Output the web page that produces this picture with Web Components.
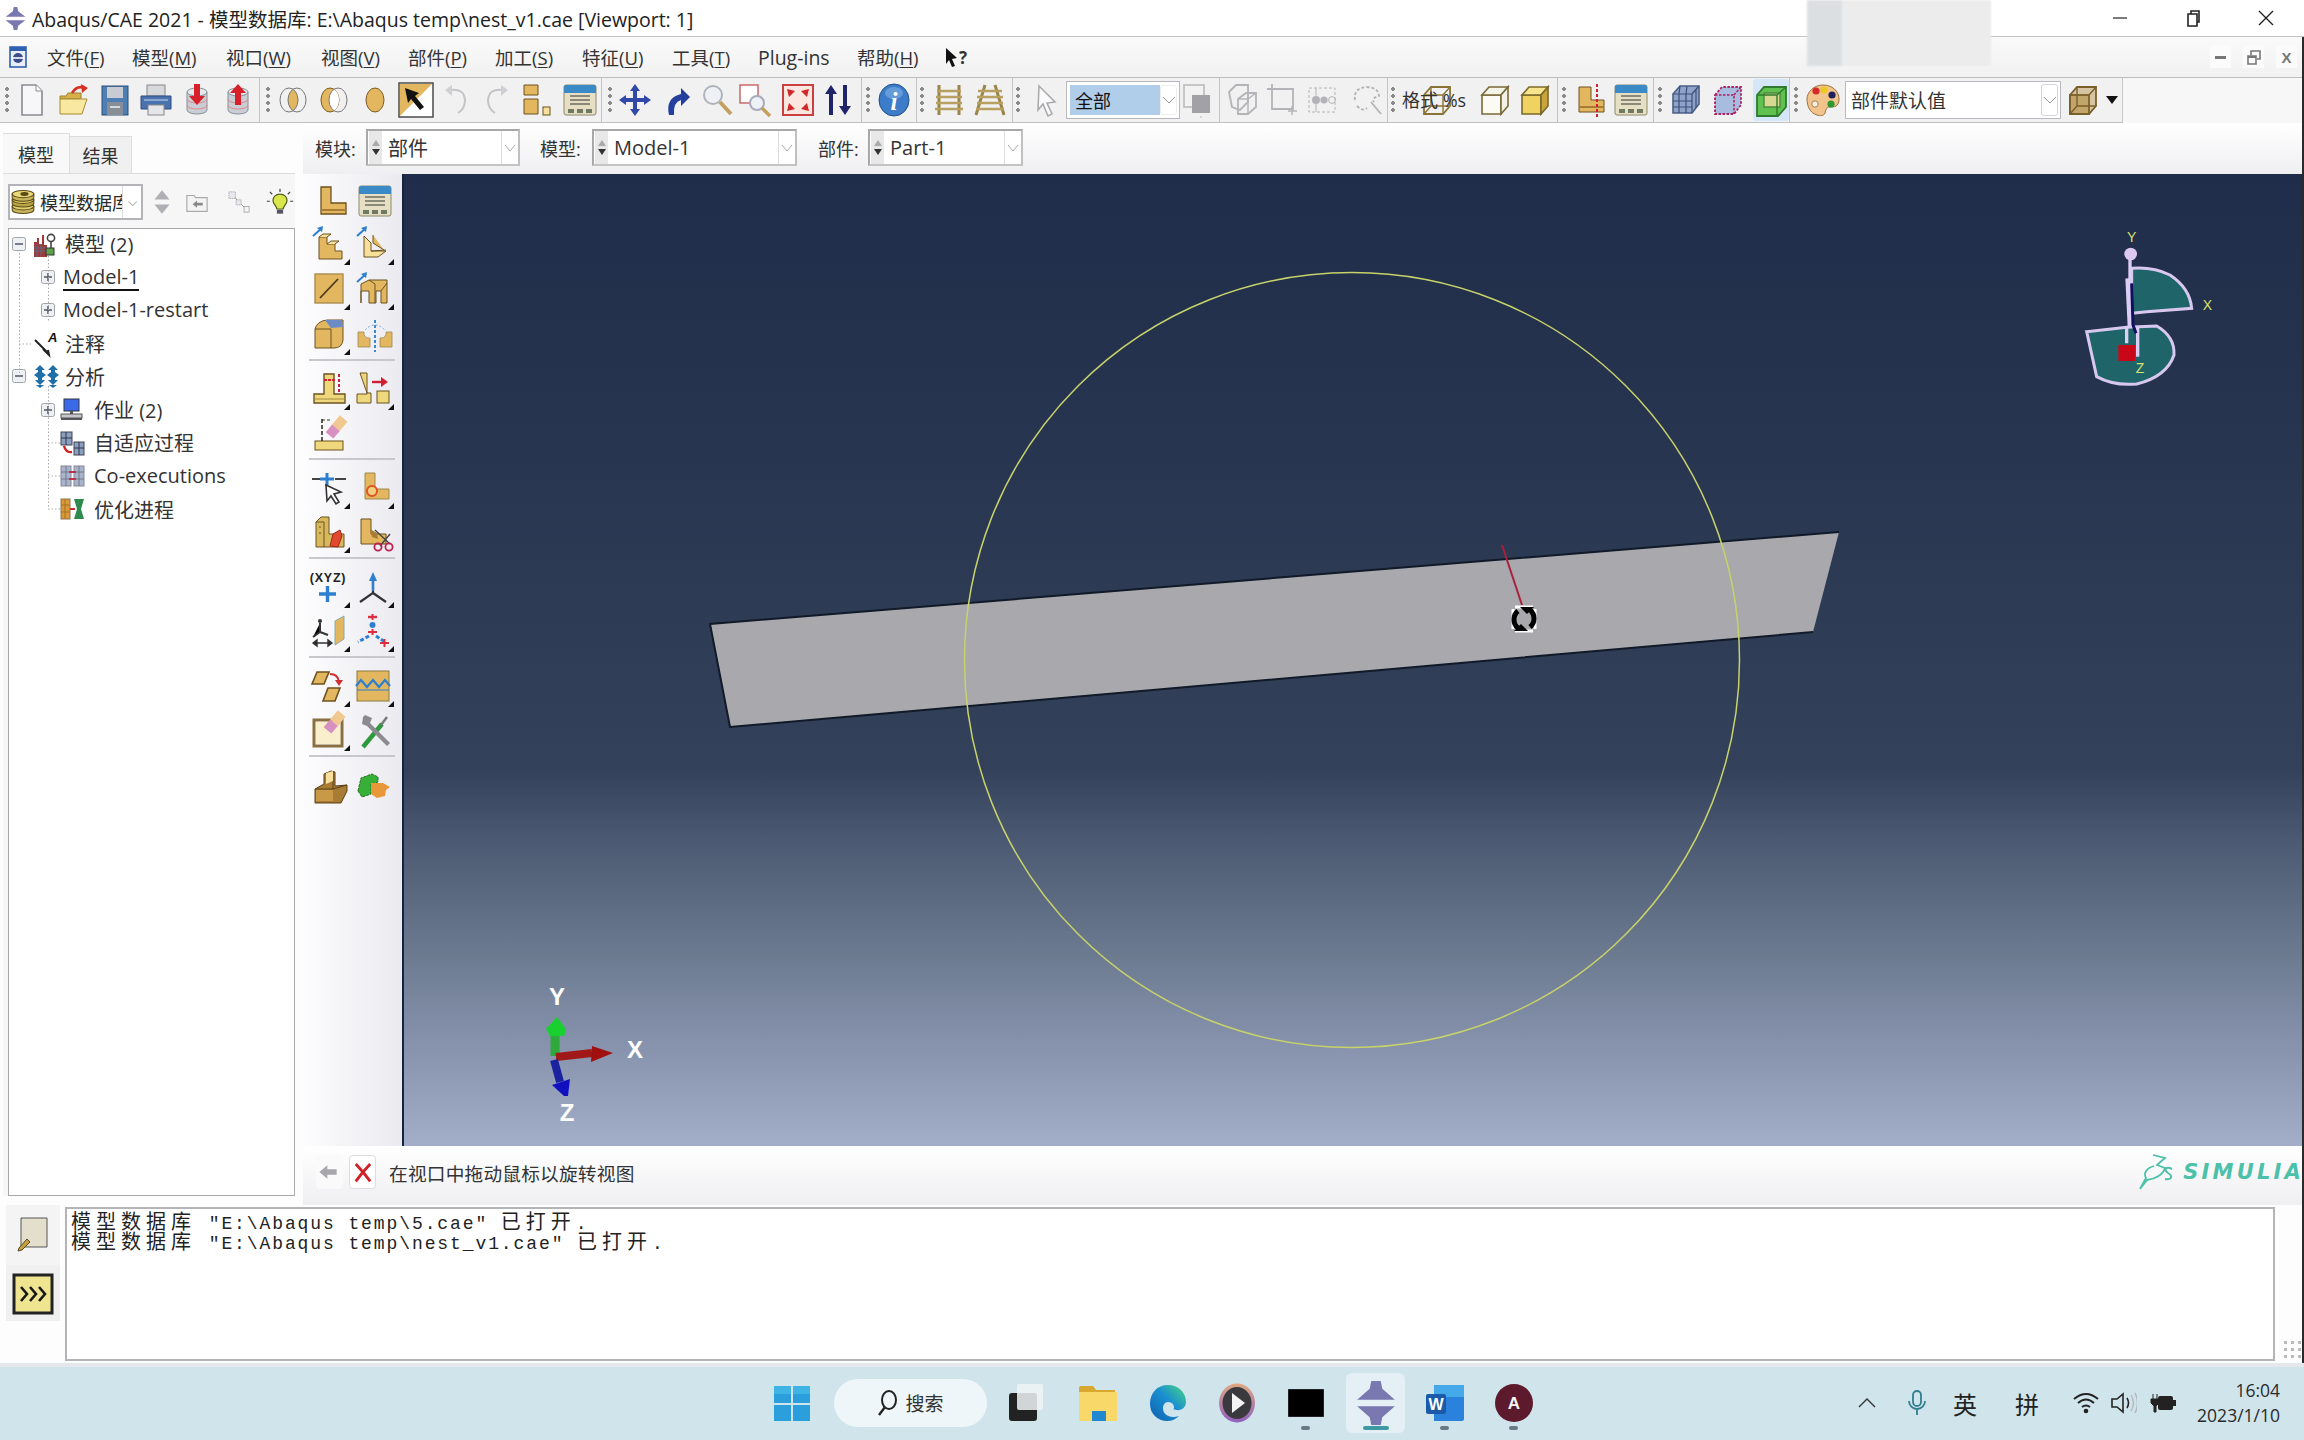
<!DOCTYPE html>
<html lang="zh">
<head>
<meta charset="utf-8">
<title>Abaqus/CAE 2021</title>
<style>
  html, body { margin: 0; height: 100%; overflow: hidden; background: #fff; }
  body { font-family: "Open Sans", "Noto Sans CJK SC", sans-serif; color: #2b2b2b; }
</style>
</head>
<body>
<abq-app>
  <abq-titlebar>Abaqus/CAE 2021 - 模型数据库: E:\Abaqus temp\nest_v1.cae [Viewport: 1]</abq-titlebar>
  <abq-menubar></abq-menubar>
  <abq-toolbar></abq-toolbar>
  <abq-workspace>
    <abq-sidepanel slot="side"></abq-sidepanel>
    <abq-modulebar slot="top"></abq-modulebar>
    <abq-toolbox slot="tools"></abq-toolbox>
    <abq-viewport slot="view"></abq-viewport>
    <abq-prompt slot="bottom">在视口中拖动鼠标以旋转视图</abq-prompt>
  </abq-workspace>
  <abq-messages></abq-messages>
  <win-taskbar></win-taskbar>
</abq-app>

<script>
const G = '#e3b75f', GL = '#f6e09c', GD = '#a87c34', O = '#6d5220', B = '#2f7fd0', GR = '#b4b4b8';

const db = ( d ) => `
  <path d="M8 10v18a10 4 0 0 0 20 0V10z" fill="#c9ced6" stroke="#8a8f98"/>
  <ellipse cx="18" cy="10" rx="10" ry="4" fill="#e6e8ec" stroke="#8a8f98"/>
  <path d="M8 17a10 4 0 0 0 20 0M8 23a10 4 0 0 0 20 0" fill="none" stroke="#e08a8a"/>
  <path d="${ d }" fill="#d8202a"/>`;

const lens = 'M17 5.25A9 12 0 0 1 17 26.75A9 12 0 0 1 17 5.25z';

const cube = ( front, top, side, line ) => `
  <path d="M5 13h19v19H5z" fill="${ front }" stroke="${ line }" stroke-width="1.6"/>
  <path d="M5 13l7-8h19l-7 8z" fill="${ top }" stroke="${ line }" stroke-width="1.6"/>
  <path d="M24 13l7-8v19l-7 8z" fill="${ side }" stroke="${ line }" stroke-width="1.6"/>`;

const wire = ( line, fill ) => `
  <path d="M5 13l7-8h19v19l-7 8H5z" fill="${ fill }" stroke="${ line }" stroke-width="1.8"/>
  <path d="M5 13h19v19M24 13l7-8M12 5v19h19M12 24l-7 8" fill="none" stroke="${ line }" stroke-width="1.4"/>`;

const manager = `
  <rect x="2" y="3" width="32" height="30" rx="2" fill="#e6dfc4" stroke="#8d8a6e"/>
  <path d="M2 5a2 2 0 0 1 2-2h28a2 2 0 0 1 2 2v6H2z" fill="#3b8ac8"/>
  <path d="M8 14h20M8 18h20M8 22h20" stroke="#6e6e60" stroke-width="1.6"/>
  <path d="M6 27h6v4H6zM15 27h6v4h-6zM24 27h6v4h-6z" fill="#6e7a62"/>`;

const ladder = ( r1, r2 ) => `
  <path d="M${ r1 } 3L${ r2 } 33M${ 36 - r1 } 3L${ 36 - r2 } 33" stroke="#9a8448" stroke-width="3" fill="none"/>
  <path d="M6 9h24M5 15h26M5 21h26M4 27h28" stroke="#b8a060" stroke-width="2.4"/>`;

const tee = `<path d="M13 3h10v20h11v9H3v-9h10z" fill="#efd87c" stroke="${ O }" stroke-width="1.4"/><path d="M3 28h31" stroke="#a08c40"/>`;
const ell = `<path d="M8 4h10v16h15v11H8z" fill="${ G }" stroke="${ O }" stroke-width="1.3"/><path d="M8 27h25" stroke="${ GD }" stroke-width="2"/>`;
const eraser = ( x, y ) => `
  <g transform="translate(${ x } ${ y }) rotate(40)"><rect x="-5" y="-15" width="10" height="12" fill="#f0c890"/><rect x="-5" y="-3" width="10" height="10" fill="#d890c0"/></g>`;

const ICONS = {
  new: `<path d="M8 3h14l6 6v24H8z" fill="#f7f7f7" stroke="#8a8a92" stroke-width="1.6"/><path d="M22 3v6h6" fill="#fff" stroke="#8a8a92"/>`,
  open: `<path d="M3 14h6l2-3h13v6H3z" fill="#d8b048" stroke="#9a8030"/><path d="M3 17h27l-5 15H3z" fill="#f8e8a0" stroke="#a88a30"/><path d="M15 11q5-8 13-5" stroke="#d83020" stroke-width="2.6" fill="none"/><path d="M24 2l7 4-6 5z" fill="#d83020"/>`,
  save: `<rect x="5" y="4" width="26" height="29" fill="#4d7fb4" stroke="#2c4f78"/><rect x="10" y="5" width="16" height="11" fill="#c8ccd2"/><rect x="10" y="20" width="16" height="13" fill="#888e98"/><rect x="13" y="24" width="10" height="2" fill="#d4d8dc"/>`,
  print: `<rect x="9" y="3" width="18" height="11" fill="#d6d8dc" stroke="#888"/><path d="M3 14h30v13H3z" fill="#4a72ae" stroke="#2f4d80"/><rect x="10" y="23" width="16" height="10" fill="#e4e6ea" stroke="#888"/><path d="M6 18h24" stroke="#8aa8d0" stroke-width="2"/>`,
  import: db( 'M15 2h6v12h5l-8 9-8-9h5z' ),
  export: db( 'M18 2l8 9h-5v12h-6V11h-5z' ),
  venn1: `<g transform="translate(1 2)"><path d="${ lens }" fill="${ G }"/><ellipse cx="13" cy="16" rx="9" ry="12" fill="none" stroke="#777"/><ellipse cx="21" cy="16" rx="9" ry="12" fill="none" stroke="#777"/></g>`,
  venn2: `<g transform="translate(1 2)"><ellipse cx="13" cy="16" rx="9" ry="12" fill="${ G }" stroke="#7a5a20"/><path d="${ lens }" fill="#fff"/><ellipse cx="21" cy="16" rx="9" ry="12" fill="none" stroke="#777"/></g>`,
  venn3: `<ellipse cx="18" cy="18" rx="9" ry="12" fill="${ G }" stroke="#7a5a20"/>`,
  pick: `<rect x="1" y="1" width="34" height="34" fill="#fff" stroke="#555" stroke-width="1.6"/><path d="M2 2h32L2 34z" fill="${ G }"/><path d="M7 6l14 5-4 3 9 11-4 3-9-11-3 4z" fill="#111"/>`,
  undo: `<path d="M12 8q14-2 15 10 0 9-7 13" fill="none" stroke="#c4c4c8" stroke-width="2"/><path d="M14 3l-7 5 7 6z" fill="#d0d0d4"/>`,
  redo: `<path d="M24 8q-14-2-15 10 0 9 7 13" fill="none" stroke="#c4c4c8" stroke-width="2"/><path d="M22 3l7 5-7 6z" fill="#d0d0d4"/>`,
  parts: `<path d="M6 3h14v10H6z" fill="${ G }" stroke="${ O }"/><path d="M6 17h14v15H6z" fill="${ G }" stroke="${ O }"/><rect x="25" y="25" width="7" height="8" fill="${ GL }" stroke="${ O }"/>`,
  manager,
  pan: `<path d="M18 2l5 7h-3v7h7v-3l7 5-7 5v-3h-7v7h3l-5 7-5-7h3v-7H9v3l-7-5 7-5v3h7V9h-3z" fill="#3048a8"/>`,
  rotate: `<path d="M11 33q-4-17 12-21V6l9 9-9 9v-6q-8 2-7 15z" fill="#25409c"/>`,
  zoom: `<circle cx="14" cy="13" r="9" fill="#eef2f6" stroke="#b0b4ba" stroke-width="2"/><path d="M21 20l11 12" stroke="#c4a060" stroke-width="4"/>`,
  boxzoom: `<rect x="3" y="3" width="18" height="18" fill="#fff" stroke="#c86060" stroke-width="1.4"/><circle cx="20" cy="21" r="7" fill="#eef2f6" stroke="#aab" stroke-width="2"/><path d="M25 26l8 8" stroke="#c4a060" stroke-width="3.6"/>`,
  fit: `<rect x="3" y="3" width="30" height="30" fill="#fbe6e0" stroke="#c84040" stroke-width="2"/><path d="M7 7l8 2-6 6zM29 7l-8 2 6 6zM7 29l8-2-6-6zM29 29l-8-2 6-6z" fill="#d02828"/>`,
  updown: `<path d="M11 3l6 9h-4v21H9V12H5zM25 33l-6-9h4V3h4v21h4z" fill="#20246a"/>`,
  info: `<ellipse cx="18" cy="18" rx="15" ry="16" fill="#3c7cc8" stroke="#20508c"/><ellipse cx="18" cy="11" rx="9" ry="6" fill="#7eb0e4" opacity=".6"/><text x="18" y="28" font-family="Liberation Serif" font-style="italic" font-weight="700" font-size="25" text-anchor="middle" fill="#fff">i</text>`,
  ladder1: ladder( 8, 8 ),
  ladder2: ladder( 13, 4 ),
  arrow: `<path d="M9 4l16 16-8 1 5 11-4 2-5-12-5 6z" fill="#fafafa" stroke="#a8a8ac" stroke-width="1.5"/>`,
  grayc: `<rect x="4" y="3" width="20" height="22" fill="#f2f2f2" stroke="#bbb" stroke-width="1.6"/><rect x="12" y="13" width="18" height="18" fill="#a2a2a6"/><path d="M20 35h2" stroke="#bbb"/>`,
  graybox: `<path d="M4 10l7-7h12v17l-8 8-8-3z" fill="none" stroke="${ GR }" stroke-width="1.8"/><path d="M13 17l8-6h10v14l-8 7H13z" fill="none" stroke="${ GR }" stroke-width="1.8"/><path d="M13 17h10v15M23 17l8-6" fill="none" stroke="${ GR }" stroke-width="1.4"/>`,
  graycrop: `<path d="M8 2v26M3 7h26v20H8" fill="none" stroke="${ GR }" stroke-width="1.8"/><path d="M28 24v9M24 29h9" stroke="${ GR }" stroke-width="1.4"/>`,
  graydots: `<rect x="4" y="6" width="26" height="24" fill="none" stroke="${ GR }" stroke-dasharray="3 2"/><circle cx="11" cy="18" r="4" fill="${ GR }"/><circle cx="19" cy="18" r="3.6" fill="${ GR }"/><circle cx="27" cy="18" r="3.4" fill="none" stroke="${ GR }"/><path d="M11 6v24" stroke="${ GR }"/>`,
  graylasso: `<path d="M6 18q-2-12 12-13 12 1 12 9-8 2-5 6M8 24q6 6 10 2" fill="none" stroke="${ GR }" stroke-width="1.8" stroke-dasharray="3 2"/><path d="M22 20l10 12" stroke="${ GR }" stroke-width="1.8"/>`,
  wirecube: wire( '#8a7434', 'none' ),
  whitecube: cube( '#fbfbf4', '#f4f4e8', '#f2f2e6', '#7a6a3a' ),
  goldcube: cube( '#f0d260', '#f8e48c', '#caa43c', '#7a6a2a' ),
  gold2cube: `<path d="M5 13h19v19H5z" fill="#c8ac74" stroke="#7a5f28" stroke-width="1.8"/>` + wire( '#7a5f28', 'rgba(190,160,100,.55)' ),
  datum: `<path d="M6 5h12v13h13v12H6z" fill="${ G }" stroke="${ O }"/><path d="M6 25h25" stroke="${ GD }" stroke-width="2"/><path d="M24 2v34" stroke="#d02030" stroke-width="2" stroke-dasharray="3 2"/>`,
  meshcube: `<path d="M5 12l7-8h19v18l-7 9H5z" fill="#8fa3c8" stroke="#4c5f88" stroke-width="1.6"/><path d="M5 12h19v19M24 12l7-8M11 12v19M18 12v19M5 19h19M5 25h19M12 4l-1 8M19 4l-1 8M28 8v18" fill="none" stroke="#3c4f78" stroke-width="1.2"/>`,
  dashcube: `<path d="M5 13l7-8h19v18l-7 9H5z" fill="#a8bce0" stroke="#b02060" stroke-width="1.8" stroke-dasharray="2.5 1.5"/><path d="M5 13h19v19M24 13l7-8" fill="none" stroke="#b02060" stroke-width="1.5" stroke-dasharray="2.5 1.5"/>`,
  greencube: `<path d="M4 13l7-8h22v20l-8 9H4z" fill="#60c050" stroke="#2f7a2c" stroke-width="1.8"/><path d="M11 11h16v14H11z" fill="#d8d890" stroke="#4a8a3c" stroke-width="1.4"/><path d="M4 13h20v21M24 13l9-8" fill="none" stroke="#2f7a2c" stroke-width="1.4"/>`,
  palette: `<path d="M18 3c9 0 16 6 16 14s-5 8-9 8-4 3-5 6-5 3-8 2C5 31 2 24 2 17S9 3 18 3z" fill="#f2c48c" stroke="#9a7040"/><circle cx="11" cy="9" r="3.6" fill="#d82828"/><circle cx="19" cy="8" r="3.4" fill="#eec820"/><circle cx="27" cy="13" r="3.6" fill="#20205c"/><circle cx="26" cy="22" r="3.6" fill="#2c9a30"/><circle cx="10" cy="22" r="3.2" fill="#fbeedd" stroke="#a08060"/>`,
  note: `<path d="M7 3h26v29H7z" fill="#e4dfcc" stroke="#555"/><path d="M5 33l8-9 3 3-8 8-4 1z" fill="#c4a040" stroke="#5a4a20"/>`,
  go: `<rect x="0" y="0" width="38" height="38" fill="#efe590" stroke="#222" stroke-width="3"/><path d="M7 12l6 7-6 7M16 12l6 7-6 7M25 12l6 7-6 7" fill="none" stroke="#181818" stroke-width="2.6"/>`,
  back: `<path d="M14 8v6h14v8H14v6L2 18z" fill="#a8a8ac"/>`,
  stop: `<path d="M8 7l10 11L8 31M28 7L18 18l10 13" fill="none" stroke="#d02028" stroke-width="4"/>`,
  dbstack: `<g stroke="#5a4a18" stroke-width="1.4"><path d="M3 24v5a15 5 0 0 0 30 0v-5z" fill="#c8b45c"/><ellipse cx="18" cy="24" rx="15" ry="5" fill="#e0d070"/><path d="M3 15v5a15 5 0 0 0 30 0v-5z" fill="#b8a448"/><ellipse cx="18" cy="15" rx="15" ry="5" fill="#e0cc68"/><path d="M3 7v5a15 5 0 0 0 30 0V7z" fill="#c8b45c"/><ellipse cx="18" cy="7" rx="15" ry="5" fill="#e8d878"/><ellipse cx="20" cy="7" rx="5" ry="2" fill="#5a4a18"/></g>`,
  updownpale: `<path d="M18 4l9 11H9zM18 32l9-11H9z" fill="#b0b0b4"/>`,
  folderup: `<path d="M4 9h10l2 3h16v19H4z" fill="#f4f4f4" stroke="#aaa" stroke-width="1.6"/><path d="M12 21l6-5v3h8v4h-8v3z" fill="#8a8a8a"/>`,
  tree2: `<rect x="4" y="4" width="9" height="9" fill="#e8e8f0" stroke="#999" stroke-dasharray="2 1"/><rect x="14" y="15" width="7" height="7" fill="#e8e8f0" stroke="#999" stroke-dasharray="2 1"/><rect x="25" y="24" width="7" height="8" fill="#f4f4f4" stroke="#999"/><path d="M13 12l2 3M21 21l4 4" stroke="#777"/>`,
  bulb: `<path d="M18 8c6 0 9 4 9 8 0 5-4 6-5 11h-8c-1-5-5-6-5-11 0-4 3-8 9-8z" fill="#d8e84c" stroke="#556020" stroke-width="1.6"/><path d="M14 28h8v5h-8z" fill="#556"/><path d="M18 1v4M5 5l3 3M31 5l-3 3M1 17h4M31 17h4" stroke="#444" stroke-width="1.5"/>`,

  models: `<path d="M1 22V10h3V6h2v6h3V3h2v10h3v12H1z" fill="#a03838"/><path d="M1 16h13M1 19h13M4 12v13M8 12v13" stroke="#5a6a88"/><circle cx="18" cy="6" r="3.6" fill="#fff" stroke="#444" stroke-width="1.6"/><path d="M18 10v7" stroke="#444" stroke-width="1.6"/><rect x="13" y="16" width="8" height="7" fill="#5ea04a" stroke="#333"/>`,
  annot: `<path d="M2 9l14 14M10 18l6 6-1-5" stroke="#222" stroke-width="2" fill="none"/><text x="15" y="11" font-family="Liberation Sans" font-weight="700" font-style="italic" font-size="13" fill="#111">A</text>`,
  analysis: `<g fill="#1f6fa8"><path d="M7 1l5 5H9v2l4 3-4 3v2h3l-5 5-5-5h3v-2l-4-3 4-3V6H2z"/><path d="M7 24l4-3H3z"/><path d="M20 1l5 5h-3v2l4 3-4 3v2h3l-5 5-5-5h3v-2l-4-3 4-3V6h-3z"/><path d="M20 24l4-3h-8z"/></g>`,
  job: `<rect x="4" y="1" width="15" height="12" fill="#3a6ae8" stroke="#334"/><path d="M10 13h3v3h-3z" fill="#555"/><rect x="1" y="16" width="21" height="4" fill="#c8c8cc" stroke="#555"/><path d="M1 20h21v2H1z" fill="#555"/>`,
  adapt: `<rect x="1" y="1" width="11" height="13" fill="#8aa0c0" stroke="#445"/><rect x="14" y="11" width="10" height="13" fill="#8aa0c0" stroke="#445"/><path d="M6 1v13M1 7h11M19 11v13M14 17h10" stroke="#334"/><path d="M4 15q2 7 8 6" stroke="#d02020" stroke-width="2.4" fill="none"/>`,
  coexec: `<rect x="1" y="2" width="10" height="20" fill="#a8b4cc" stroke="#889"/><rect x="14" y="2" width="10" height="20" fill="#a8b4cc" stroke="#889"/><path d="M6 2v20M19 2v20M1 8h10M14 8h10M1 15h10M14 15h10" stroke="#778"/><path d="M9 8h7M9 15h7" stroke="#c03048" stroke-width="2"/>`,
  optim: `<rect x="1" y="2" width="9" height="20" fill="#d89838" stroke="#875"/><path d="M5 2v20M1 8h9M1 15h9" stroke="#a87020"/><path d="M14 2h10l-3 10 3 10H14l3-10z" fill="#2f8a50"/><path d="M10 12h5" stroke="#c03030" stroke-width="2"/>`,

  t_part: ell,
  t_manager: manager,
  t_solid: `<path d="M8 11h8v7h8v7h7v8H8z" fill="${ G }" stroke="${ O }"/><path d="M8 11l4-3h8l-4 3M16 18l4-3h8l-4 3" fill="${ GL }" stroke="${ O }"/><path d="M2 10l9-8" stroke="${ B }" stroke-width="2"/><path d="M12 0l-1 6-5-4z" fill="${ B }"/>`,
  t_shell: `<path d="M9 10l7 7v8h15l-8 6H9z" fill="${ GL }" stroke="${ O }"/><path d="M16 25l15-1" stroke="${ O }"/><path d="M18 9v8l11 7" fill="${ G }" stroke="${ O }"/><path d="M2 10l9-8" stroke="${ B }" stroke-width="2"/><path d="M12 0l-1 6-5-4z" fill="${ B }"/>`,
  t_wire: `<rect x="4" y="3" width="28" height="29" fill="${ G }" stroke="#a88e50" stroke-width="1.4"/><path d="M9 27L27 8" stroke="#4a3a18" stroke-width="1.8"/>`,
  t_cutshell: `<path d="M6 13l8-4h18v23h-6V20h-5v12h-7V20H6v12z" fill="${ G }" stroke="${ O }"/><path d="M14 9l6 4v19M26 20l6-8" fill="none" stroke="${ O }"/><path d="M2 11l9-8" stroke="${ B }" stroke-width="2"/><path d="M12 1l-1 6-5-4z" fill="${ B }"/>`,
  t_round: `<path d="M4 13q2-8 12-9h16v20q-1 8-9 8H4z" fill="${ G }" stroke="${ O }"/><path d="M14 4l6 8 12-1-1-7z" fill="#6c8cc8"/><path d="M4 13h16v19" fill="none" stroke="${ O }"/>`,
  t_mirror: `<path d="M1 14h6v3q2 4 6 3v9H1zM35 14h-6v3q-2 4-6 3v9h12z" fill="${ G }" stroke="#a08850" stroke-width=".8"/><path d="M18 2v32" stroke="#3a8ad0" stroke-width="2" stroke-dasharray="3 2"/><path d="M8 12q10-10 20 0" fill="none" stroke="#6aa8e0" stroke-dasharray="2 2"/>`,
  t_t1: tee + `<path d="M13 9h11" stroke="#d02030" stroke-width="2" stroke-dasharray="3 1"/><path d="M28 3v18" stroke="#c02040" stroke-width="2" stroke-dasharray="3 2"/>`,
  t_t2: `<path d="M5 2h7v21H2v9h14V22h-4z" fill="#efd87c" stroke="${ O }"/><rect x="22" y="20" width="12" height="12" fill="#efd87c" stroke="${ O }"/><path d="M17 11h11" stroke="#d02030" stroke-width="2.4"/><path d="M33 11l-7-5v10z" fill="#d02030"/>`,
  t_t3: `<rect x="2" y="24" width="28" height="9" fill="#efd87c" stroke="${ O }"/><path d="M9 2v22" stroke="#332" stroke-width="1.6" stroke-dasharray="4 2"/><path d="M9 3h8" stroke="#332" stroke-dasharray="3 2"/>` + eraser( 21, 13 ),
  t_axis: `<path d="M1 9h8M24 9h11" stroke="#444" stroke-width="2.2"/><path d="M9 9h14M16 3v13" stroke="${ B }" stroke-width="3"/><path d="M15 15l15 7-7 2 5 8-3 2-5-8-4 5z" fill="#fff" stroke="#333" stroke-width="1.6"/>`,
  t_lcircle: `<path d="M10 3h10v16h14v10H10z" fill="${ G }" stroke="#a08850"/><circle cx="17" cy="21" r="5" fill="#f0d080" stroke="#e05020" stroke-width="2"/>`,
  t_cutface: `<path d="M5 8l5-5h8v17h15v13H5z" fill="#d8b85c" stroke="${ O }"/><path d="M5 8h8v25" fill="none" stroke="${ O }"/><path d="M22 20l7-4 2 6-4 11-8-1z" fill="#e04830" stroke="#a02818"/><path d="M9 12v2M9 18v2" stroke="${ O }"/>`,
  t_scissors: `<path d="M4 3h10v15h15v10H4z" fill="${ G }" stroke="${ O }"/><path d="M13 13l7 4 1 6-6-2z" fill="${ GD }"/><path d="M18 14l15 14M33 18l-10 12" stroke="#444" stroke-width="1.4"/><circle cx="21" cy="31" r="3.6" fill="none" stroke="#c02050" stroke-width="1.8"/><circle cx="32" cy="31" r="3.6" fill="none" stroke="#c02050" stroke-width="1.8"/>`,
  t_xyz: `<text x="17" y="13" font-family="Liberation Sans" font-weight="700" font-size="12.5" letter-spacing=".8" text-anchor="middle" fill="#222">(XYZ)</text><path d="M8 25h17M16.500 17v16" stroke="${ B }" stroke-width="3.4"/>`,
  t_triad: `<path d="M18 12v12L5 33M18 24l13 9" fill="none" stroke="#333" stroke-width="2.2"/><path d="M18 3l-4 9h8z" fill="#2f7fd0"/><path d="M18 12v10" stroke="#2f7fd0" stroke-width="2.4"/>`,
  t_plane: `<path d="M24 8l9-5v23l-9 6z" fill="${ G }" stroke="#8aa"/><path d="M9 10v9l-7 5M9 19l8 3" stroke="#333" stroke-width="2"/><path d="M2 30h19M2 30l4-3v6zM21 30l-4-3v6z" stroke="#333" stroke-width="1.4"/><circle cx="9" cy="8" r="2" fill="#333"/>`,
  t_dots: `<path d="M13 4h9" stroke="#d83040" stroke-width="2.4"/><path d="M17.500 1v6M13 19h9M17.500 16v6" stroke="#d83040" stroke-width="2"/><circle cx="17.500" cy="12" r="3" fill="#2f7fd0"/><path d="M14 23L3 29M21 23l9 6" stroke="#2f7fd0" stroke-width="3" stroke-dasharray="4 2"/><path d="M25 30h9M29.500 26v8" stroke="#d83040" stroke-width="2"/>`,
  t_flip: `<path d="M6 4h12l-5 12H1zM17 20h12l-5 13H12z" fill="${ G }" stroke="${ O }" stroke-width="1.6"/><path d="M19 6q8 0 9 8" fill="none" stroke="#d03030" stroke-width="2"/><path d="M24 12h8l-4 6z" fill="#d03030"/>`,
  t_wave: `<rect x="2" y="3" width="32" height="30" fill="${ G }" stroke="#8a7a40"/><path d="M1 18l5-6 6 7 6-7 6 7 6-7 5 6" fill="none" stroke="#2f7fd0" stroke-width="2.2"/><path d="M2 22h32" stroke="#2f7fd0" stroke-width="1"/>`,
  t_erasebox: `<rect x="3" y="8" width="28" height="26" fill="#fff" stroke="#8a7040" stroke-width="3"/><rect x="5" y="10" width="24" height="22" fill="${ GL }" opacity=".5"/>` + eraser( 21, 13 ),
  t_tools: `<path d="M6 33L25 10" stroke="#2e9a3c" stroke-width="4.5"/><path d="M24 11L30 3" stroke="#777" stroke-width="2.4"/><path d="M6 3l-1 7 5 2 20 20 3-3-20-20 2-5-7-3z" fill="#8a8a90"/>`,
  t_step: `<path d="M2 20l9-5V5l7-3 4 1v14l12-1v6l-6 12H2z" fill="${ GD }" stroke="#5a4018"/><path d="M2 20h18V3M20 20l14-4" fill="none" stroke="#5a4018"/><path d="M3 21h17v11H3z" fill="#c89a48"/><path d="M13 4l7-2v10l-7 3z" fill="${ GL }"/>`,
  t_green: `<path d="M1 22l3-13 11-4 6 3v5l-7 2v10l-9 3z" fill="#38b038" stroke="#1e7020" stroke-dasharray="3 1"/><path d="M14 14h12l7 4-4 3-1 6-8 2-6-4z" fill="#e89838"/>`,

  abaqus: `<path d="M12 1h4l1 5 8 6H3l8-6z" fill="#7a78b0"/><path d="M3 16h22l-8 6-1 5h-4l-1-5z" fill="#7a78b0"/>`
};

class AbqElement extends HTMLElement {

  constructor () {

    super();

    this.attachShadow( { mode: 'open' } );

  }

  html ( css, markup ) {

    this.shadowRoot.innerHTML = `<style>${ css }</style>${ markup }`;

  }

}

class AbqIcon extends AbqElement {

  connectedCallback () {

    const size = this.getAttribute( 'size' ) || 36;
    const box = this.getAttribute( 'box' ) || 36;
    const flag = this.hasAttribute( 'flag' ) ? '<path d="M39 33v6h-6z" fill="#111"/>' : '';
    const view = this.hasAttribute( 'flag' ) ? '0 0 40 40' : `0 0 ${ box } ${ box }`;
    const px = this.hasAttribute( 'flag' ) ? 40 : size;

    this.html(
      ':host { display: inline-flex; flex: none; } svg { display: block; overflow: visible; }',
      `<svg width="${ px }" height="${ px }" viewBox="${ view }">${ ICONS[ this.getAttribute( 'name' ) ] }${ flag }</svg>`
    );

  }

}

class AbqApp extends AbqElement {

  connectedCallback () {

    this.html( `
      :host { display: flex; flex-direction: column; width: 2304px; height: 1440px; overflow: hidden; position: relative; }
      .edge { position: absolute; right: 0; top: 37px; width: 2px; height: 1326px; background: #2a2a2a; }
    `, '<slot></slot><div class="edge"></div>' );

  }

}

class AbqTitlebar extends AbqElement {

  connectedCallback () {

    this.html( `
      :host { display: flex; align-items: center; height: 37px; flex: none; position: relative; background: #fff; border-bottom: 1px solid #c4c4c4; box-sizing: border-box; font-size: 19.500px; color: #222; white-space: nowrap; }
      .logo { margin: 0 4px 0 3px; }
      .controls { margin-left: auto; display: flex; margin-right: 26px; align-items: center; gap: 49px; }
      svg { display: block; }
      .smear { position: absolute; left: 1807px; top: 0; width: 184px; height: 66px; z-index: 2; background: linear-gradient( 90deg, #dcdfe2 0, #dcdfe2 35px, #ececec 35px ); filter: blur( 1px ); }
    `, `
      <abq-icon class="logo" name="abaqus" size="25" box="28"></abq-icon>
      <span><slot></slot></span>
      <div class="controls">
        <svg width="24" height="24" viewBox="0 0 24 24"><path d="M5 12h14" stroke="#333" stroke-width="1.3"/></svg>
        <svg width="24" height="24" viewBox="0 0 24 24"><path d="M7 8h9v12H7zM10 8V5h8v11h-2" fill="none" stroke="#222" stroke-width="1.6"/></svg>
        <svg width="24" height="24" viewBox="0 0 24 24"><path d="M5 5l14 14M19 5L5 19" stroke="#222" stroke-width="1.4"/></svg>
      </div>
      <div class="smear"></div>
    ` );

  }

}

class AbqMenubar extends AbqElement {

  connectedCallback () {

    const items = [
      [ 85, '文件', 'F' ], [ 94, '模型', 'M' ], [ 95, '视口', 'W' ], [ 87, '视图', 'V' ], [ 87, '部件', 'P' ],
      [ 87, '加工', 'S' ], [ 90, '特征', 'U' ], [ 86, '工具', 'T' ], [ 99, 'Plug-ins' ], [ 88, '帮助', 'H' ]
    ];

    const menu = items.map( ( [ width, label, key ] ) => {

      const text = key ? `${ label }(<u>${ key }</u>)` : `<span class="latin">${ label }</span>`;

      return `<span class="item" style="width:${ width }px">${ text }</span>`;

    } ).join( '' );

    this.html( `
      :host { display: flex; align-items: center; height: 41px; flex: none; background: linear-gradient( #fafafa, #f1f1f1 ); font-size: 18.500px; color: #333; box-sizing: border-box; border-bottom: 1px solid #bdbdbd; padding-left: 9px; }
      .item { flex: none; white-space: nowrap; }
      .latin { font-size: 19.500px; }
      u { text-underline-offset: 2px; }
      svg { display: block; flex: none; }
      .doc { margin-right: 20px; }
      .help { display: flex; align-items: center; font-weight: 700; font-size: 17px; margin-left: 0; }
      .mdi { margin-left: auto; margin-right: 7px; display: flex; gap: 12px; }
      .mdi b { display: flex; align-items: center; justify-content: center; width: 21px; height: 22px; background: #fbfbfb; color: #777; font: 700 15px "Liberation Sans", sans-serif; }
    `, `
      <svg class="doc" width="18" height="22" viewBox="0 0 18 22"><rect x="1" y="1" width="16" height="20" fill="#e8eefa" stroke="#3060b0" stroke-width="1.6"/><rect x="1" y="1" width="16" height="4" fill="#3060b0"/><ellipse cx="9" cy="12" rx="5" ry="5" fill="#3c4c88"/><path d="M3 12h12" stroke="#fff" stroke-width="1.6"/></svg>
      ${ menu }
      <span class="help"><svg width="14" height="22" viewBox="0 0 14 22"><path d="M1 2l11 10-5 1 3 7-3 1-3-7-3 4z" fill="#111"/></svg>?</span>
      <div class="mdi">
        <b><svg width="11" height="4"><rect y="1" width="11" height="3" fill="#777"/></svg></b>
        <b><svg width="14" height="15" viewBox="0 0 14 15"><path d="M1 6h8v8H1zM4 5V1h9v8h-3" fill="none" stroke="#777" stroke-width="1.6"/><path d="M1 6h8v2H1z" fill="#777"/></svg></b>
        <b>X</b>
      </div>
    ` );

  }

}

class AbqToolbar extends AbqElement {

  connectedCallback () {

    // [ centre x, kind ] in page pixels, the margins are worked out from the centres
    const items = [
      [ 7, 'grip' ], [ 32, 'new' ], [ 75, 'open' ], [ 115, 'save' ], [ 156, 'print' ], [ 197, 'import' ], [ 238, 'export' ],
      [ 259, 'sep' ], [ 268, 'grip' ], [ 293, 'venn1' ], [ 334, 'venn2' ], [ 375, 'venn3' ], [ 416, 'pick' ], [ 456, 'undo' ], [ 497, 'redo' ], [ 536, 'parts' ], [ 580, 'manager' ],
      [ 601, 'sep' ], [ 610, 'grip' ], [ 635, 'pan' ], [ 676, 'rotate' ], [ 717, 'zoom' ], [ 755, 'boxzoom' ], [ 798, 'fit' ], [ 838, 'updown' ],
      [ 861, 'sep' ], [ 868, 'grip' ], [ 894, 'info' ],
      [ 916, 'sep' ], [ 922, 'grip' ], [ 949, 'ladder1' ], [ 990, 'ladder2' ],
      [ 1012, 'sep' ], [ 1018, 'grip' ], [ 1048, 'arrow' ],
      [ 1123, 'combo-all' ], [ 1198, 'grayc' ], [ 1219, 'sep' ], [ 1243, 'graybox' ], [ 1282, 'graycrop' ], [ 1323, 'graydots' ], [ 1367, 'graylasso' ],
      [ 1387, 'sep' ], [ 1393, 'grip' ], [ 1437, 'format' ], [ 1495, 'whitecube' ], [ 1535, 'goldcube' ],
      [ 1557, 'sep' ], [ 1564, 'grip' ], [ 1591, 'datum' ], [ 1631, 'manager' ],
      [ 1653, 'sep' ], [ 1660, 'grip' ], [ 1686, 'meshcube' ], [ 1728, 'dashcube' ], [ 1771, 'greencube' ],
      [ 1789, 'sep' ], [ 1796, 'grip' ], [ 1823, 'palette' ], [ 1953, 'combo-style' ], [ 2083, 'gold2cube' ], [ 2112, 'drop' ]
    ];

    const widths = { grip: 4, sep: 1, 'combo-all': 114, 'combo-style': 216, format: 70, drop: 14 };

    let right = 0;

    const markup = items.map( ( [ x, kind ] ) => {

      const width = widths[ kind ] || 36;
      const margin = x - width / 2 - right;

      right = x + width / 2;

      const style = `style="margin-left:${ margin }px"`;

      if ( kind === 'grip' ) return `<i class="grip" ${ style }></i>`;
      if ( kind === 'sep' ) return `<i class="sep" ${ style }></i>`;
      if ( kind === 'drop' ) return `<svg ${ style } width="14" height="8" viewBox="0 0 14 8"><path d="M1 0h12L7 8z" fill="#111"/></svg>`;
      if ( kind === 'combo-all' ) return `<div class="combo all" ${ style }><span>全部</span><em></em></div>`;
      if ( kind === 'combo-style' ) return `<div class="combo style" ${ style }><span>部件默认值</span><em></em></div>`;
      if ( kind === 'format' ) return `<div class="format" ${ style }><abq-icon name="wirecube"></abq-icon><span>格式 %s</span></div>`;
      if ( kind === 'greencube' ) return `<div class="on" ${ style }><abq-icon name="greencube"></abq-icon></div>`;

      return `<abq-icon ${ style } name="${ kind }"></abq-icon>`;

    } ).join( '' );

    this.html( `
      :host { display: block; height: 45px; flex: none; background: #f7f7f7; box-sizing: border-box; }
      .row { display: flex; align-items: center; height: 45px; width: 2123px; box-sizing: border-box; background: #f1f1f1; border-bottom: 1px solid #c0c0c0; border-right: 1px solid #c8c8c8; }
      .grip { display: block; flex: none; width: 4px; height: 26px; background: radial-gradient( circle at 2px 2px, #8a8a8a 1.700px, transparent 2px ) 0 0 / 4px 7px; }
      .sep { display: block; flex: none; width: 1px; height: 44px; background: #c4c4c4; }
      .combo { flex: none; display: flex; align-items: center; height: 38px; box-sizing: border-box; border: 1px solid #b8b8c0; background: #fff; font-size: 19px; }
      .combo span { flex: 1; padding-left: 5px; color: #333; }
      .combo em { flex: none; width: 17px; height: 32px; margin-right: 2px; border-radius: 3px; border: 1px solid #d4d4d8; box-sizing: border-box; background: #fff no-repeat center / 14px 8px url("data:image/svg+xml,%3Csvg xmlns='http://www.w3.org/2000/svg' viewBox='0 0 14 8'%3E%3Cpath d='M1 1l6 6 6-6' fill='none' stroke='%23999'/%3E%3C/svg%3E"); }
      .all { width: 114px; padding: 3px 0 3px 3px; }
      .style { width: 216px; }
      .all span { background: #b0cdea; height: 100%; display: flex; align-items: center; color: #111; font-size: 18px; padding-left: 5px; }
      .all em { border-color: #eee; height: 30px; }
      .format { flex: none; width: 70px; height: 36px; position: relative; display: flex; justify-content: center; }
      .format span { position: absolute; left: 0; top: 4px; white-space: nowrap; font-size: 18px; color: #333; }
      .on { flex: none; width: 36px; height: 42px; display: flex; align-items: center; background: #d4e6f8; border-radius: 3px; }
    `, `<div class="row">${ markup }</div>` );

  }

}

class AbqWorkspace extends AbqElement {

  connectedCallback () {

    this.html( `
      :host { display: grid; flex: none; height: 1082px; grid-template-columns: 303px 99px 1fr; grid-template-rows: 51px 972px 59px; background: #f4f4f6; }
      ::slotted( [ slot="side" ] ) { grid-row: 1 / 4; grid-column: 1; }
      ::slotted( [ slot="top" ] ) { grid-row: 1; grid-column: 2 / 4; }
      ::slotted( [ slot="tools" ] ) { grid-row: 2; grid-column: 2; }
      ::slotted( [ slot="view" ] ) { grid-row: 2; grid-column: 3; }
      ::slotted( [ slot="bottom" ] ) { grid-row: 3; grid-column: 2 / 4; }
    `, `<slot name="side"></slot><slot name="top"></slot><slot name="tools"></slot><slot name="view"></slot><slot name="bottom"></slot>` );

  }

}

class AbqSidepanel extends AbqElement {

  connectedCallback () {

    this.html( `
      :host { display: flex; flex-direction: column; background: #fdfdfd; padding: 10px 8px 9px 3px; box-sizing: border-box; font-size: 18px; }
      .tabs { display: flex; height: 40px; flex: none; }
      .tabs span { display: flex; align-items: center; justify-content: center; box-sizing: border-box; width: 67px; color: #333; background: #f8f8f8; border-top: 1px solid #ddd; border-right: 1px solid #ddd; }
      .tabs span + span { width: 62px; margin-top: 3px; background: #f0f0f0; }
      .body { flex: 1; display: flex; flex-direction: column; border-top: 1px solid #ddd; padding: 10px 0 0 5px; min-height: 0; background: #f6f6f6; }
      .tools { display: flex; align-items: center; height: 36px; flex: none; }
      .db { display: flex; align-items: center; width: 135px; height: 36px; flex: none; box-sizing: border-box; border: 2px solid #b4b4b8; background: #fff; overflow: hidden; position: relative; white-space: nowrap; font-size: 18px; }
      .db span { margin-left: 4px; }
      .db em { position: absolute; right: 0; top: 0; width: 18px; height: 32px; background: #fff; border-left: 1px solid #ddd; text-align: center; color: #888; font: 12px "DejaVu Sans", sans-serif; line-height: 32px; }
      .list { flex: 1; margin-top: 8px; min-height: 0; box-sizing: border-box; border: 1px solid #a8a8a8; background: #fff; position: relative; }
      .list abq-tree-row:first-of-type { margin-top: -2px; }
      .guides { position: absolute; left: 0; top: 0; }
    `, `
      <div class="tabs"><span>模型</span><span>结果</span></div>
      <div class="body">
        <div class="tools">
          <div class="db"><abq-icon name="dbstack" size="26"></abq-icon><span>模型数据库</span><em>⌵</em></div>
          <abq-icon name="updownpale" size="30" style="margin-left:4px"></abq-icon>
          <abq-icon name="folderup" size="26" style="margin-left:7px"></abq-icon>
          <abq-icon name="tree2" size="26" style="margin-left:16px"></abq-icon>
          <abq-icon name="bulb" size="28" style="margin-left:14px"></abq-icon>
        </div>
        <div class="list">
          <svg class="guides" width="286" height="300" viewBox="9 228 286 300"><path d="M19.500 252v120M19 343h12M48.500 255v65M48.500 385v122M48 442h12M48 475h12M48 508h12" fill="none" stroke="#aaa" stroke-dasharray="1.500 2"/></svg>
          <abq-tree-row expander="minus" icon="models" indent="0">模型 (2)</abq-tree-row>
          <abq-tree-row expander="plus" indent="1" mark>Model-1</abq-tree-row>
          <abq-tree-row expander="plus" indent="1">Model-1-restart</abq-tree-row>
          <abq-tree-row expander="none" icon="annot" indent="0">注释</abq-tree-row>
          <abq-tree-row expander="minus" icon="analysis" indent="0">分析</abq-tree-row>
          <abq-tree-row expander="plus" icon="job" indent="1">作业 (2)</abq-tree-row>
          <abq-tree-row expander="none" icon="adapt" indent="1">自适应过程</abq-tree-row>
          <abq-tree-row expander="none" icon="coexec" indent="1">Co-executions</abq-tree-row>
          <abq-tree-row expander="none" icon="optim" indent="1">优化进程</abq-tree-row>
        </div>
      </div>
    ` );

  }

}

class AbqTreeRow extends AbqElement {

  connectedCallback () {

    const indent = +this.getAttribute( 'indent' ) * 29;
    const expander = this.getAttribute( 'expander' );
    const icon = this.getAttribute( 'icon' );
    const sign = expander === 'minus' ? 'M3 7h8' : 'M3 7h8M7 3v8';
    const box = expander === 'none' ? '' : `<svg width="14" height="14" viewBox="0 0 14 14" style="display:block"><rect x=".5" y=".5" width="13" height="13" rx="2" fill="#eef0f4" stroke="#a0a4ac"/><path d="${ sign }" stroke="#556" stroke-width="1.500"/></svg>`;
    const pic = icon ? `<abq-icon name="${ icon }" size="24" box="24" style="margin-left:${ indent ? 5 : 7 }px;margin-right:${ indent ? 10 : 8 }px"></abq-icon>` : `<span style="width:8px"></span>`;

    this.html( `
      :host { display: flex; align-items: center; height: 33.200px; padding-left: ${ 3 + indent }px; font-size: 20px; color: #333; white-space: nowrap; }
      .exp { flex: none; width: 14px; height: 14px; }
      .mark { border-bottom: 2px solid #111; line-height: 25px; margin-top: 2px; }
    `, `<span class="exp">${ box }</span>${ pic }<span class="${ this.hasAttribute( 'mark' ) ? 'mark' : '' }"><slot></slot></span>` );

  }

}

class AbqCombo extends AbqElement {

  connectedCallback () {

    this.html( `
      :host { display: flex; align-items: center; box-sizing: border-box; height: 37px; border: 2px solid #a8a8a8; border-right-color: #c0c0c0; border-bottom-color: #c4c4c4; background: #fff; font-size: 20px; color: #333; flex: none; }
      .spin { flex: none; width: 13px; height: 33px; background: #e8e8e8; display: flex; flex-direction: column; align-items: center; justify-content: center; gap: 3px; margin-left: 1px; }
      .text { flex: 1; padding-left: 6px; white-space: nowrap; }
      .drop { flex: none; width: 16px; height: 33px; border-left: 1px solid #ddd; display: flex; align-items: center; justify-content: center; }
      svg { display: block; }
    `, `
      <div class="spin">
        <svg width="8" height="6"><path d="M4 0l4 6H0z" fill="#aaa"/></svg>
        <svg width="8" height="6"><path d="M0 0h8L4 6z" fill="#333"/></svg>
      </div>
      <div class="text"><slot></slot></div>
      <div class="drop"><svg width="12" height="8"><path d="M1 1l5 6 5-6" fill="none" stroke="#aaa"/></svg></div>
    ` );

  }

}

class AbqModulebar extends AbqElement {

  connectedCallback () {

    this.html( `
      :host { display: flex; align-items: center; background: linear-gradient( #ffffff, #efeff2 ); font-size: 18px; color: #333; padding: 0 0 2px 12px; box-sizing: border-box; }
      span { white-space: nowrap; flex: none; width: 44px; }
    `, `
      <span>模块:</span><abq-combo style="width:154px;margin-left:7px">部件</abq-combo>
      <span style="margin-left:20px;width:45px">模型:</span><abq-combo style="width:205px;margin-left:7px">Model-1</abq-combo>
      <span style="margin-left:21px">部件:</span><abq-combo style="width:155px;margin-left:6px">Part-1</abq-combo>
    ` );

  }

}

class AbqToolbox extends AbqElement {

  connectedCallback () {

    const groups = [
      [ [ 't_part' ], [ 't_manager' ], [ 't_solid', 1 ], [ 't_shell', 1 ], [ 't_wire', 1 ], [ 't_cutshell', 1 ], [ 't_round', 1 ], [ 't_mirror' ] ],
      [ [ 't_t1', 1 ], [ 't_t2', 1 ], [ 't_t3' ] ],
      [ [ 't_axis', 1 ], [ 't_lcircle', 1 ], [ 't_cutface', 1 ], [ 't_scissors' ] ],
      [ [ 't_xyz', 1 ], [ 't_triad', 1 ], [ 't_plane', 1 ], [ 't_dots', 1 ] ],
      [ [ 't_flip', 1 ], [ 't_wave', 1 ], [ 't_erasebox', 1 ], [ 't_tools' ] ],
      [ [ 't_step' ], [ 't_green' ] ]
    ];

    const markup = groups.map( ( group, i ) => {

      const cells = group.map( ( [ name, flag ] ) => `<div class="cell"><abq-icon name="${ name }" ${ flag ? 'flag' : '' }></abq-icon></div>` ).join( '' );

      return `<div class="group" style="grid-auto-rows:${ i ? 44 : 45 }px">${ cells }</div>`;

    } ).join( '<hr>' );

    this.html( `
      :host { display: block; box-sizing: border-box; padding: 4px 6px 0 5px; background: linear-gradient( 90deg, #fdfdfe, #eaeaf0 ); }
      .group { display: grid; grid-template-columns: 44px 44px; margin-bottom: 1px; }
      .cell { display: flex; align-items: center; justify-content: center; padding-left: 1px; }
      hr { border: 0; height: 2px; background: #c8c8cc; margin: 0 1px 8px; }
    `, markup );

  }

}

class AbqViewport extends AbqElement {

  connectedCallback () {

    this.html( `
      :host { display: block; position: relative; overflow: hidden; background: linear-gradient( #1f2d4a 0, #26344f 25%, #33415a 61.300%, #4b5a72 68.500%, #6c7b90 80.500%, #828ea8 87.800%, #a3aec8 100% ); box-shadow: inset 2px 0 #17233c; border-right: 2px solid #f0f0f0; }
      svg { display: block; position: absolute; left: 0; top: 0; }
      text { font-family: "Liberation Sans", sans-serif; }
    `, `
      <svg width="1900" height="972" viewBox="402 174 1900 972">
        <path d="M710 624L1839 532 1813 632 730 727z" fill="#a9a8ac"/>
        <path d="M1839 532L710 624 730 727 1813 632" fill="none" stroke="#111a28" stroke-width="2"/>
        <circle cx="1352" cy="660" r="387.500" fill="none" stroke="#c8d26a" stroke-width="1.500"/>
        <path d="M1502 545L1522 605" stroke="#a8203c" stroke-width="2"/>

        <path d="M1515 607h18M1515 631h18M1513 609v20M1535 609v20" stroke="#fff" stroke-width="3"/>
        <g fill="none" stroke="#000" stroke-width="5">
          <path d="M1518 628a11 11 0 0 1 0-17"/>
          <path d="M1530 610a11 11 0 0 1 0 17"/>
        </g>
        <path d="M1520 607h14l-7 7zM1528 631h-14l7-7z" fill="#000"/>

        <g>
          <path d="M555 1056V1026" stroke="#2fa83c" stroke-width="9"/>
          <path d="M557 1017l9 12-2 7h-14l-4-7z" fill="#18d030"/>
          <path d="M556 1057L592 1053" stroke="#a01818" stroke-width="8"/>
          <path d="M592 1046l21 7-22 9z" fill="#a01010"/>
          <path d="M554 1060l6 22" stroke="#1a22a0" stroke-width="8"/>
          <path d="M552 1085l18-6-2 17-4 0z" fill="#1010c0"/>
          <g font-weight="700" font-size="24" fill="#fff" text-anchor="middle">
            <text x="557" y="1005">Y</text>
            <text x="635" y="1058">X</text>
            <text x="567" y="1121">Z</text>
          </g>
        </g>

        <g transform="translate(1900 200) scale(.33333)">
          <path d="M695 205Q760 200 810 225 870 265 875 325L740 335 695 340z" fill="#1f6468" stroke="#d8c8f0" stroke-width="9"/>
          <path d="M560 395L680 382 770 378Q825 410 822 465 800 530 710 552 640 558 590 530z" fill="#1f6468" stroke="#d8c8f0" stroke-width="9"/>
          <path d="M690 170V380M680 380V430M713 380V470" stroke="#dccdf4" stroke-width="10" fill="none"/>
          <path d="M683 235L690 380" stroke="#dccdf4" stroke-width="14"/>
          <path d="M695 250L699 375 708 400" stroke="#101060" stroke-width="9" fill="none"/>
          <rect x="655" y="435" width="50" height="48" fill="#c80818"/>
          <circle cx="692" cy="162" r="19" fill="#dcc8f0"/>
          <g font-size="42" fill="#d8e070" text-anchor="middle">
            <text x="695" y="125">Y</text>
            <text x="922" y="330">X</text>
            <text x="720" y="520">Z</text>
          </g>
        </g>
      </svg>
    ` );

  }

}

class AbqPrompt extends AbqElement {

  connectedCallback () {

    this.html( `
      :host { display: flex; align-items: center; background: linear-gradient( #ffffff, #efeff2 ); font-size: 18.700px; letter-spacing: .2px; color: #333; overflow: hidden; padding: 0 0 7px 13px; box-sizing: border-box; }
      .btn { display: flex; align-items: center; justify-content: center; width: 27px; height: 34px; border-radius: 4px; background: #fafafa; flex: none; }
      .stop { background: #fff; border: 1px solid #ddd; box-sizing: border-box; margin-left: 6px; }
      .text { margin-left: 13px; white-space: nowrap; }
      .brand { margin-left: auto; display: flex; align-items: center; color: #4cc0a8; flex: none; }
      .brand span { font: italic 700 21px "DejaVu Sans", sans-serif; letter-spacing: 3.200px; margin-left: 8px; }
    `, `
      <div class="btn"><abq-icon name="back" size="24"></abq-icon></div>
      <div class="btn stop"><abq-icon name="stop" size="26"></abq-icon></div>
      <div class="text"><slot></slot></div>
      <div class="brand">
        <svg width="36" height="36" viewBox="0 0 36 36"><path d="M14 1l12 3-8 7 8 3c-2 7-10 11-18 12L1 35l6-11c-3-5 1-10 8-12" fill="none" stroke="#4cc0a8" stroke-width="1.800"/><path d="M33 15c-6-3-9 1-4 4s4 7-3 6" fill="none" stroke="#4cc0a8" stroke-width="2"/></svg>
        <span>SIMULIA</span>
      </div>
    ` );

  }

}

class AbqMessages extends AbqElement {

  connectedCallback () {

    const line = ( file ) => `<div><b>模型数据库</b> "E:\\Abaqus temp\\${ file }" <b>已打开</b>.</div>`;

    this.html( `
      :host { display: flex; height: 158px; flex: none; background: #fdfdfd; position: relative; box-sizing: border-box; }
      .side { flex: none; width: 65px; padding: 0 0 0 6px; box-sizing: border-box; display: flex; flex-direction: column; }
      .top { height: 60px; background: #f4f4f4; display: flex; align-items: center; justify-content: center; padding: 0 2px 4px 0; box-sizing: border-box; margin-right: 5px; }
      .bottom { height: 56px; background: #f0f0f0; display: flex; justify-content: center; padding-top: 10px; box-sizing: border-box; margin-right: 5px; }
      .log { flex: none; width: 2210px; height: 154px; margin-top: 2px; box-sizing: border-box; border: 2px solid #b4b4b8; background: #fff; padding: 5px 4px; font: 18px/20px "Liberation Mono", "Noto Sans CJK SC", monospace; letter-spacing: 1.900px; color: #222; white-space: pre; }
      .log b { font-weight: 400; font-size: 20px; letter-spacing: 5px; }
      .grip { position: absolute; right: 2px; bottom: 4px; width: 20px; height: 20px; background: radial-gradient( circle, #bbb 1.700px, transparent 2px ) 0 0 / 7px 7px; }
    `, `
      <div class="side">
        <div class="top"><abq-icon name="note"></abq-icon></div>
        <div class="bottom"><abq-icon name="go" size="38" box="38"></abq-icon></div>
      </div>
      <div class="log">${ line( '5.cae' ) }${ line( 'nest_v1.cae' ) }</div>
      <div class="grip"></div>
    ` );

  }

}

class WinTaskbar extends AbqElement {

  connectedCallback () {

    this.html( `
      :host { display: block; height: 81px; flex: none; box-sizing: border-box; border-top: 4px solid #e4e8ea; background: #d0e4ec; overflow: hidden; }
      .row { display: flex; align-items: center; height: 72px; box-sizing: border-box; }
      svg { display: block; flex: none; }
      .start { margin-left: 774px; }
      .search { display: flex; align-items: center; justify-content: center; gap: 8px; margin-left: 24px; width: 153px; height: 48px; border-radius: 24px; background: #eef6f9; font-size: 19px; color: #333; flex: none; }
      .app { flex: none; display: flex; justify-content: center; align-items: center; width: 59px; height: 60px; position: relative; border-radius: 6px; }
      .active { background: #e4f0f5; }
      .app i { position: absolute; bottom: 3px; left: 50%; width: 9px; height: 4px; margin-left: -4.500px; border-radius: 2px; background: #6a7a84; }
      .active i { width: 26px; margin-left: -13px; background: #3e9aa0; }
      .tray { margin-left: auto; display: flex; align-items: center; color: #222; padding-right: 24px; font-size: 24px; }
      .clock { display: flex; flex-direction: column; align-items: flex-end; font-size: 17.500px; line-height: 25px; margin-left: 21px; color: #2a2a2a; }
    `, `
      <div class="row">
        <svg class="start" width="36" height="36" viewBox="0 0 36 36"><path d="M0 1h17v17H0zM19 1h17v17H19zM0 20h17v16H0zM19 20h17v16H19z" fill="#2a9fdc"/><path d="M0 1h17v8H0zM19 1h17v8H19z" fill="#4ec2e8" opacity=".6"/></svg>
        <div class="search">
          <svg width="20" height="26" viewBox="0 0 20 26"><ellipse cx="12" cy="10" rx="7" ry="9" fill="none" stroke="#222" stroke-width="2"/><path d="M8 17l-6 8" stroke="#222" stroke-width="2.400"/></svg>
          <span>搜索</span>
        </div>
        <div class="app" style="margin-left:8px"><svg width="40" height="44" viewBox="0 0 40 44"><rect x="4" y="12" width="28" height="28" rx="3" fill="#222"/><rect x="12" y="3" width="26" height="26" rx="2" fill="#f0f4f6" opacity=".85"/></svg></div>
        <div class="app" style="margin-left:14px"><svg width="38" height="36" viewBox="0 0 38 36"><path d="M0 3a2 2 0 0 1 2-2h12l3 4h19v30H0z" fill="#d8a830"/><path d="M0 7h38v29H0z" fill="#f8d868"/><path d="M13 26h14v10H13z" fill="#1e88d0"/></svg></div>
        <div class="app" style="margin-left:11px"><svg width="38" height="38" viewBox="0 0 38 38"><defs><linearGradient id="edge" x1="0" y1="1" x2="1" y2="0"><stop offset="0" stop-color="#0f5fb0"/><stop offset=".55" stop-color="#1a90d0"/><stop offset="1" stop-color="#48d880"/></linearGradient></defs><path d="M19 1C8 1 1 9 1 20c0 10 8 17 17 17 5 0 9-2 12-5-9 3-16-1-16-8 0-3 2-6 5-6 4 0 6 3 6 5 0 1 0 2-1 2 6 3 13 0 13-7C37 8 29 1 19 1z" fill="url(#edge)"/></svg></div>
        <div class="app" style="margin-left:10px"><svg width="38" height="40" viewBox="0 0 38 40"><defs><linearGradient id="ring" x1="0" y1="0" x2="0" y2="1"><stop offset="0" stop-color="#e0a880"/><stop offset="1" stop-color="#9060c0"/></linearGradient></defs><ellipse cx="19" cy="20" rx="18" ry="19.500" fill="url(#ring)"/><ellipse cx="19" cy="20" rx="14.500" ry="16" fill="#3a3a3e"/><path d="M14 10l13 10-13 10z" fill="#f4f4f4"/></svg></div>
        <div class="app" style="margin-left:10px"><svg width="36" height="28" viewBox="0 0 36 28"><rect width="36" height="28" fill="#000" stroke="#889" stroke-width=".5"/></svg><i></i></div>
        <div class="app active" style="margin-left:11px"><svg width="44" height="48" viewBox="0 0 28 28"><path d="M11 0h6l1 5 8 7H2l8-7z" fill="#7a78b0"/><path d="M2 16h24l-8 7-1 5h-6l-1-5z" fill="#7a78b0"/></svg><i></i></div>
        <div class="app" style="margin-left:10px"><svg width="38" height="38" viewBox="0 0 38 38"><path d="M8 1h28a2 2 0 0 1 2 2v32a2 2 0 0 1-2 2H8z" fill="#2a82dc"/><path d="M8 1h30v12H8z" fill="#45a8e8"/><rect x="0" y="10" width="20" height="20" rx="2" fill="#1a5aa8"/><text x="10" y="26" font-family="Liberation Sans" font-weight="700" font-size="16" fill="#fff" text-anchor="middle">W</text></svg><i></i></div>
        <div class="app" style="margin-left:10px"><svg width="38" height="38" viewBox="0 0 38 38"><circle cx="19" cy="19" r="19" fill="#5c1a2c"/><text x="19" y="25" font-family="Liberation Sans" font-weight="700" font-size="17" fill="#f4f4f4" text-anchor="middle">A</text></svg><i></i></div>
        <div class="tray">
          <svg width="18" height="10" viewBox="0 0 18 10"><path d="M1 9l8-8 8 8" fill="none" stroke="#333" stroke-width="1.400"/></svg>
          <svg style="margin-left:31px" width="20" height="26" viewBox="0 0 20 26"><rect x="6" y="1" width="8" height="15" rx="4" fill="none" stroke="#2f7f8f" stroke-width="1.800"/><path d="M2 11a8 8 0 0 0 16 0M10 20v5" fill="none" stroke="#2f7f8f" stroke-width="1.800"/></svg>
          <span style="margin-left:26px">英</span>
          <span style="margin-left:38px">拼</span>
          <svg style="margin-left:34px" width="26" height="22" viewBox="0 0 26 22"><path d="M1 7q12-10 24 0M5 11q8-7 16 0M9 15q4-3 8 0" fill="none" stroke="#222" stroke-width="2"/><circle cx="13" cy="19" r="2.300" fill="#222"/></svg>
          <svg style="margin-left:12px" width="26" height="22" viewBox="0 0 26 22"><path d="M1 7h5l6-5v18l-6-5H1z" fill="none" stroke="#222" stroke-width="1.600"/><path d="M16 6q3 5 0 10" fill="none" stroke="#222" stroke-width="1.600"/><path d="M20 3q5 8 0 16M24 1q5 10 0 20" fill="none" stroke="#b0b8bc" stroke-width="1.400"/></svg>
          <svg style="margin-left:13px" width="26" height="20" viewBox="0 0 26 20"><rect x="8" y="3" width="15" height="14" rx="2" fill="#222"/><rect x="23" y="7" width="3" height="6" fill="#222"/><path d="M3 1v5M7 1v5M1 6h8v4l-3 3v6H4v-6l-3-3z" fill="#222" stroke="#222"/></svg>
          <div class="clock"><span>16:04</span><span>2023/1/10</span></div>
        </div>
      </div>
    ` );

  }

}

customElements.define( 'abq-icon', AbqIcon );
customElements.define( 'abq-app', AbqApp );
customElements.define( 'abq-titlebar', AbqTitlebar );
customElements.define( 'abq-menubar', AbqMenubar );
customElements.define( 'abq-toolbar', AbqToolbar );
customElements.define( 'abq-workspace', AbqWorkspace );
customElements.define( 'abq-sidepanel', AbqSidepanel );
customElements.define( 'abq-tree-row', AbqTreeRow );
customElements.define( 'abq-combo', AbqCombo );
customElements.define( 'abq-modulebar', AbqModulebar );
customElements.define( 'abq-toolbox', AbqToolbox );
customElements.define( 'abq-viewport', AbqViewport );
customElements.define( 'abq-prompt', AbqPrompt );
customElements.define( 'abq-messages', AbqMessages );
customElements.define( 'win-taskbar', WinTaskbar );
</script>
</body>
</html>
